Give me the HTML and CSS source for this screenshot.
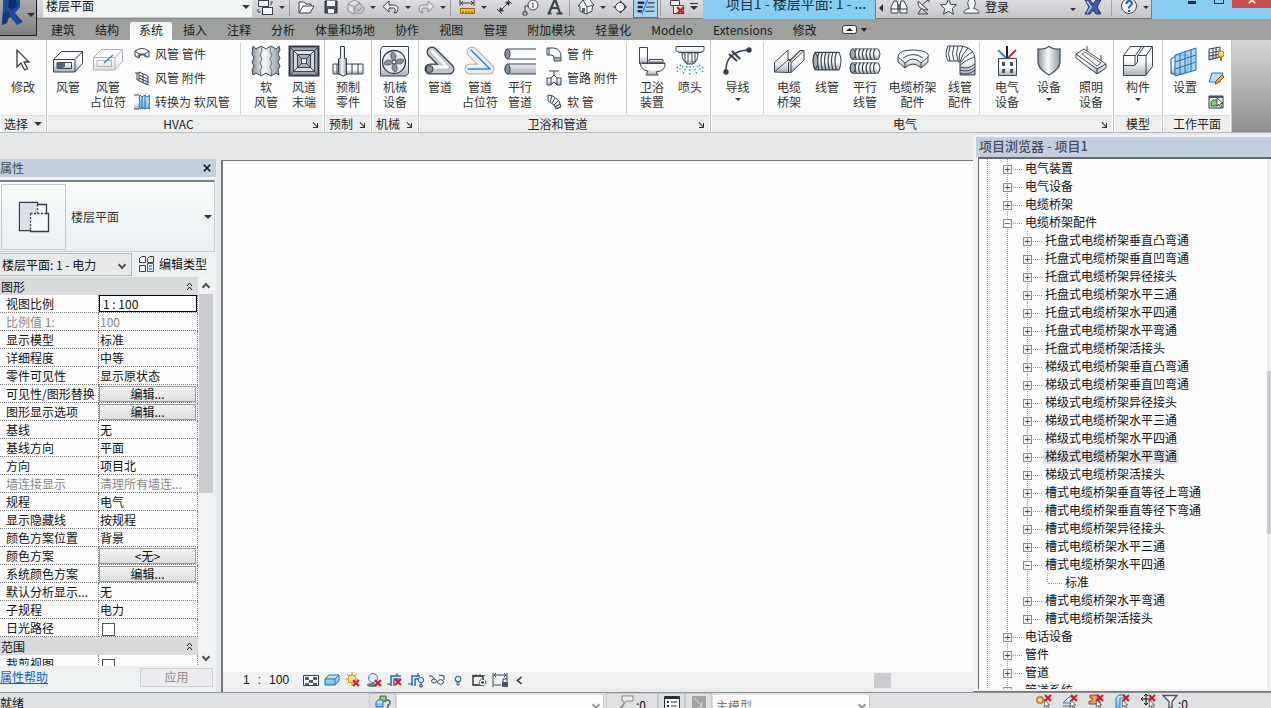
FILE: index.html
```html
<!DOCTYPE html>
<html lang="zh-CN">
<head>
<meta charset="utf-8">
<title>项目1 - 楼层平面</title>
<link rel="stylesheet" href="styles.css">
</head>
<body>
<svg class="defs" aria-hidden="true">
  <defs>
    <linearGradient id="metal" x1="0" y1="0" x2="0" y2="1"><stop offset="0" stop-color="#f4f6f8"/><stop offset=".5" stop-color="#fff"/><stop offset="1" stop-color="#a9b0b9"/></linearGradient>
    <linearGradient id="metalx" x1="0" y1="0" x2="1" y2="0"><stop offset="0" stop-color="#8d959f"/><stop offset=".45" stop-color="#fafbfc"/><stop offset="1" stop-color="#8d959f"/></linearGradient>
    <linearGradient id="blue" x1="0" y1="0" x2="0" y2="1"><stop offset="0" stop-color="#d5edfb"/><stop offset="1" stop-color="#6db4e4"/></linearGradient>
    <symbol id="redx" viewBox="0 0 8 8"><path d="M1 1l6 6M7 1l-6 6" stroke="#c8202a" stroke-width="2.2" fill="none"/></symbol>
    <symbol id="rib" viewBox="0 0 30 16" preserveAspectRatio="none"><path d="M3 1h24q4 7 0 14H3q-4-7 0-14z" fill="url(#metal)" stroke="#3a4350"/><path d="M7 1q-3 7 0 14M10.500 1q-3 7 0 14M14 1q-3 7 0 14M17.500 1q-3 7 0 14M21 1q-3 7 0 14M24.500 1q-3 7 0 14" fill="none" stroke="#3a4350" stroke-width="1.200"/><ellipse cx="3.500" cy="8" rx="2.300" ry="6" fill="#a7adb6" stroke="#3a4350"/></symbol>
    <symbol id="curs" viewBox="0 0 8 10"><path d="M1 0v8l2-2 1.500 3.500 1.500-.6L4.500 5.500H7z" fill="#fff" stroke="#333" stroke-width=".8"/></symbol>
  </defs>
</svg>

<header class="top">
  <button class="app" aria-label="应用程序菜单"><svg viewBox="0 0 36 36" width="36" height="36"><path d="M3-2L12-6l8 3v10l-5 6 8 9-6 3-8-10-2 8-5 2 1-16z" fill="#1d4b9c"/><path d="M9 0h7l1 6-5 4-4-3z" fill="#0e2f6e"/><path d="M3 13l5-2 3 6-3 2-1 4-5 2z" fill="#16397c"/><path d="M27 13h8l-4 4z" fill="#333"/></svg></button>
  <div class="titlebar">
    <div class="quick">
      <div class="pick viewpick"><select aria-label="视图"><option>楼层平面</option></select><i class="caret"></i></div>
      <button class="q" aria-label="切换窗口"><svg viewBox="0 0 20 20"><rect x="3.500" y="3.500" width="10" height="6" class="w"/><rect x="7.500" y="10.500" width="10" height="7" class="w"/><path d="M16 8V5h2M3 12v3h3" class="l"/></svg></button>
      <button class="c" aria-label="更多"><i class="caret"></i></button><i class="sep"></i>
      <button class="q" aria-label="打开"><svg viewBox="0 0 20 20"><path d="M3 16V5h5l2 2h5v3" class="w"/><path d="M3 16l4-7h11l-4 7z" class="w"/></svg></button>
      <button class="q" aria-label="保存"><svg viewBox="0 0 20 20"><path d="M4 4h12v12H4z" fill="#4a5260" stroke="#222b38"/><path d="M6 4h8v5H6zM7 12h6v4H7z" fill="#f4f5f7"/></svg></button>
      <button class="q dim" aria-label="同步"><svg viewBox="0 0 20 20"><path d="M2 7l6-4 6 3v7l-6 4-6-3zM2 7l6 3 6-4M8 10v7" class="w"/><circle cx="13.500" cy="12" r="4.500" fill="#bfc2c6" stroke="#555"/><path d="M11 12l2 2 3-4" class="l"/></svg></button>
      <button class="c" aria-label="更多"><i class="caret"></i></button>
      <button class="q" aria-label="放弃"><svg viewBox="0 0 20 20"><path d="M8 4v4h4q5 0 5 4t-4 4q3-5-1-5H8v4L2 9.500z" class="w"/></svg></button>
      <button class="c" aria-label="更多"><i class="caret"></i></button>
      <button class="q dim" aria-label="重做"><svg viewBox="0 0 20 20"><path d="M12 4v4H8q-5 0-5 4t4 4q-3-5 1-5h4v4l6-5.500z" class="w"/></svg></button>
      <button class="c" aria-label="更多"><i class="caret"></i></button><i class="sep"></i>
      <button class="q" aria-label="测量"><svg viewBox="0 0 20 20"><path d="M3 3v6M17 3v6M3 6h14M6 4L4 6l2 2M14 4l2 2-2 2" class="l"/><path d="M3.500 11.500h14v5h-14z" fill="#f5bd3c" stroke="#9a6a10"/><path d="M6 14v2M9 14v2M12 14v2M15 14v2" stroke="#6d4a08"/></svg></button>
      <button class="c" aria-label="更多"><i class="caret"></i></button><i class="gap"></i>
      <button class="q" aria-label="对齐尺寸标注"><svg viewBox="0 0 20 20"><path d="M2 12l5 5M12 2l5 5M5 14l9-9" class="l"/><path d="M4 15l1-5 4 4zM15 4l-5 1 4 4z" fill="#333"/></svg></button>
      <button class="q" aria-label="按类别标记"><svg viewBox="0 0 20 20"><circle cx="13" cy="8" r="5" class="w"/><path d="M8 9H5v6M3 15h4v3H3z" class="l"/><path d="M12 6.500l1-.5v5" class="l"/></svg></button>
      <button class="q" aria-label="文字"><svg viewBox="0 0 20 20"><path d="M10 2L4 16M10 2l5 14M6 11h7M2.500 16.500h4M11.500 16.500h6" fill="none" stroke="#3a414c" stroke-width="2.200"/></svg></button>
      <i class="sep"></i>
      <button class="q" aria-label="默认三维视图"><svg viewBox="0 0 20 20"><path d="M2 9l5-6 6-1 5 6-1.500 1-.5 5-6 3-6-3V9z" class="w"/><path d="M7 3l4 7v7M11 10l6-2" class="l"/><path d="M6 11h3v5l-3-1z" fill="#59616e"/></svg></button>
      <button class="c" aria-label="更多"><i class="caret"></i></button>
      <button class="q" aria-label="剖面"><svg viewBox="0 0 20 20"><path d="M9 3l7 7-7 7z" fill="#333c48"/><circle cx="9" cy="10" r="4.500" class="w"/><path d="M2 10h3" class="l"/></svg></button>
      <button class="q on" aria-label="细线"><svg viewBox="0 0 24 20"><path d="M2 5h8M2 10h6M2 15h5" stroke="#28303c" stroke-width="3"/><path d="M14 5h8M12 10h10M11 15h11" stroke="#28303c" stroke-width="1.300"/><path d="M14 1L7 19" stroke="#2a80d8" stroke-width="1.500"/></svg></button>
      <i class="sep"></i>
      <button class="q" aria-label="关闭隐藏窗口"><svg viewBox="0 0 20 20"><path d="M3.500 3.500h9v5h-9z" class="w"/><path d="M6.500 8.500h10v8h-10z" class="w"/><use href="#redx" x="9" y="9" width="9" height="9"/></svg></button>
      <button class="c" aria-label="自定义"><i class="caret bar"></i></button>
    </div>
    <div class="doc"><span>项目1 - 楼层平面: 1 - ...</span></div>
    <div class="info">
      <button class="c" aria-label="收起"><i class="caret left"></i></button>
      <button class="q" aria-label="搜索"><svg viewBox="0 0 20 20"><path d="M5 4h3l1 5v7H2V10zM15 4h-3l-1 5v7h7V10z" class="w"/><path d="M9 8h2v4H9zM2 12h7M11 12h7" class="l"/></svg></button>
      <button class="q" aria-label="通讯中心"><svg viewBox="0 0 20 20"><path d="M4 4q-1 9 10 9z" class="w"/><path d="M8 8l6-5M13 3h2v2M9 13l5 4H4l3-5" class="l"/></svg></button>
      <button class="q" aria-label="收藏夹"><svg viewBox="0 0 20 20"><path d="M9.500 2l2.300 5.300 5.700.5-4.300 3.800 1.300 5.700-5-3-5 3 1.300-5.700L1.500 7.800l5.700-.5z" class="w"/></svg></button>
      <button class="login"><svg viewBox="0 0 20 20"><path d="M2 17q0-4 6-5-2-2-2-6 0-4 4-4t4 4q0 4-2 6 6 1 6 5z" class="w"/></svg><span>登录</span><i class="caret"></i></button>
      <button class="q" aria-label="Exchange"><svg viewBox="0 0 20 20"><path d="M2 3h5l3 4 3-4h5l-4 7 4 7h-5l-3-4-3 4H2l4-7z" fill="#3f5fa8" stroke="#27355e"/><path d="M4 4l4 6-4 6" fill="none" stroke="#a8c4ec" stroke-width="1.500"/></svg></button>
      <i class="sep wide"></i>
      <button class="q" aria-label="帮助"><svg viewBox="0 0 20 20"><circle cx="10" cy="9" r="7.500" class="w"/><path d="M7.500 7q0-3 2.700-3t2.700 2.500q0 1.500-1.600 2.300T10 11v.5M10 13v2" fill="none" stroke="#2560b4" stroke-width="2"/></svg></button>
      <button class="c" aria-label="更多"><i class="caret"></i></button>
    </div>
    <div class="win">
      <button aria-label="最小化"><i class="min"></i></button><button aria-label="最大化"><i class="max"></i></button><button class="close" aria-label="关闭"><svg viewBox="0 0 10 10" width="8" height="8"><path d="M1 1l8 8M9 1L1 9" stroke="#fff" stroke-width="2"/></svg></button>
    </div>
  </div>
  <nav class="tabs">
    <a href="#">建筑</a><a href="#">结构</a><a href="#" class="cur">系统</a><a href="#">插入</a><a href="#">注释</a><a href="#">分析</a><a href="#">体量和场地</a><a href="#">协作</a><a href="#">视图</a><a href="#">管理</a><a href="#">附加模块</a><a href="#">轻量化</a><a href="#">Modelo</a><a href="#">Extensions</a><a href="#">修改</a>
    <button class="mini" aria-label="最小化功能区"><svg viewBox="0 0 26 10" width="26" height="10"><rect x=".5" y=".5" width="14" height="8" rx="2" fill="#f5f5f5" stroke="#333"/><path d="M4 6h7L7.500 3zM19 3h6l-3 4z" fill="#222"/></svg></button>
  </nav>
</header>

<section class="ribbon">
  <div class="panel">
    <div class="body"><button class="big w46"><svg viewBox="0 0 32 32"><path d="M10 5v17l4-4 3.500 7 3-1.500L17 17h5z" fill="#fff" stroke="#333c48" stroke-width="1.300"/></svg><span>修改</span></button></div>
    <h2>选择<i class="caret"></i></h2>
  </div>
  <div class="panel pad">
    <div class="body">
      <button class="big w40"><svg viewBox="0 0 32 32"><path d="M1.500 14.500l8-8h21v12l-7.500 8.500h-21.500z" class="m"/><path d="M1.500 14.500h21.500v12.500M23 14.500l7.500-8M5 17.500h14.500v6H5z" class="l"/><path d="M5 17.500h8v4l-3 2H5z" fill="#596270"/></svg><span>风管</span></button>
      <button class="big w40"><svg viewBox="0 0 32 32"><g opacity=".4"><path d="M1.500 12.500l8-8h21v12l-7.500 8.500h-21.500z" class="m"/><path d="M1.500 12.500h21.500v12.500M23 12.500l7.500-8M5 15.500h14.500v6H5z" class="l"/></g><path d="M12 18l9-8" stroke="#2f86d6" stroke-width="1.500"/></svg><span>风管<br>占位符</span></button>
      <div class="small w112">
        <button><svg viewBox="0 0 16 16"><path d="M1 5q7-5 14 0v6h-3l-1-2H6l-1 3-4-2z" class="m"/><path d="M1 5l4 3h6l4-3M5 8v4M11 8v3" class="l"/></svg>风管 管件</button>
        <button><svg viewBox="0 0 16 16"><path d="M5 2l9 4v9l-9-4z" class="m"/><path d="M5 5l9 4M5 8l9 4M1 3h4M3 3v7h2M9 4v9" class="l"/></svg>风管 附件</button>
        <button><svg viewBox="0 0 16 16"><path d="M0 1h5v14H0z" fill="url(#metal)"/><path d="M0 1h5M0 15h5" class="l"/><path d="M6 1l2 2 3-2 2 2 3-2-1 3 1 4-1 3 1 4-3-1-2 1-3-1-2 1-1-4 1-3-1-4z" fill="url(#blue)" stroke="#1f6fb8"/><path d="M8 3v11M11 1v14" stroke="#1f6fb8"/></svg>转换为 软风管</button>
      </div>
      <i class="div"></i>
      <button class="big w38"><svg viewBox="0 0 32 32"><path d="M3 1l3 3 5-3 5 3 5-3 5 3 3-3 1 4-2 4 2 4-2 4 2 4-2 4 1 5-3-2-5 3-5-3-5 3-5-3-3 2-1-5 2-4-2-4 2-4-2-4z" fill="url(#metalx)" stroke="#3a4350"/><path d="M11 1l1 5-2 4 2 4-2 4 2 4-2 4 1 5M21 1l-1 5 2 4-2 4 2 4-2 4 2 4-1 5" fill="none" stroke="#6a727e"/></svg><span>软<br>风管</span></button>
      <button class="big w38"><svg viewBox="0 0 32 32"><path d="M1.500 1.500h29v29h-29z" fill="#9ea4ac" stroke="#2f3844" stroke-width="2"/><path d="M5.500 5.500h21v21h-21z" fill="#dfe2e5" stroke="#3a4350" stroke-width="1.200"/><path d="M9.500 9.500h13v13h-13z" fill="#aab0b8" stroke="#3a4350" stroke-width="1.200"/><path d="M13.500 13.500h5v5h-5z" fill="#fff" stroke="#3a4350" stroke-width="1.200"/><path d="M1 1l12 12M31 1L19 13M1 31l12-12M31 31L19 19" stroke="#3a4350"/></svg><span>风道<br>末端</span></button>
    </div>
    <h2>HVAC<b class="corner"></b></h2>
  </div>
  <div class="panel">
    <div class="body"><button class="big w46"><svg viewBox="0 0 32 32"><path d="M1 19h30v10H1z" class="m"/><path d="M5 19v10M20 19v10M26 19v10" class="l"/><path d="M8.500 1.500h4v12h2v16l-3 1.500-5-2v-15l2-1z" fill="url(#metalx)" stroke="#333c48"/></svg><span>预制<br>零件</span></button></div>
    <h2>预制<b class="corner"></b></h2>
  </div>
  <div class="panel">
    <div class="body"><button class="big w46"><svg viewBox="0 0 32 32"><path d="M1.500 4.500l2-3h26v27l-3 2.500h-25z" class="m"/><circle cx="15" cy="17" r="11.500" fill="#e8eaec" stroke="#333c48" stroke-width="1.300"/><path d="M15 17q-5-5-2-10 7 2 2 10zM15 17q5-5 10-2-2 7-10 2zM15 17q5 5 2 10-7-2-2-10zM15 17q-5 5-10 2 2-7 10-2z" fill="#8b929d" stroke="#4a5260" stroke-width=".8"/><circle cx="15" cy="17" r="2" fill="#fff" stroke="#333"/></svg><span>机械<br>设备</span></button></div>
    <h2>机械<b class="corner"></b></h2>
  </div>
  <div class="panel pad">
    <div class="body">
      <button class="big w40"><svg viewBox="0 0 32 32"><g fill="none" stroke-linecap="round" stroke-linejoin="round"><path d="M6 24h19L8 7" stroke="#333c48" stroke-width="11"/><path d="M6 24h19L8 7" stroke="#c3c8ce" stroke-width="8.500"/><path d="M7 22h16L8 6" stroke="#f7f8f9" stroke-width="3"/></g><circle cx="5.500" cy="24" r="3.500" fill="#8b939e" stroke="#333c48"/></svg><span>管道</span></button>
      <button class="big w40"><svg viewBox="0 0 32 32"><g fill="none" stroke-linecap="round" stroke-linejoin="round"><path d="M6 24h19L8 7" stroke="#b6bbc1" stroke-width="11"/><path d="M6 24h19L8 7" stroke="#eceef0" stroke-width="8.500"/><path d="M4 24h22L7 5" stroke="#2f86d6" stroke-width="1.500"/></g></svg><span>管道<br>占位符</span></button>
      <button class="big w40"><svg viewBox="0 0 32 32"><path d="M3 4h30v10H3q-4-5 0-10zM3 19h30v10H3q-4-5 0-10z" class="m"/><ellipse cx="3.500" cy="9" rx="2.500" ry="4.500" fill="#8b939e" stroke="#333c48"/><ellipse cx="3.500" cy="24" rx="2.500" ry="4.500" fill="#8b939e" stroke="#333c48"/></svg><span>平行<br>管道</span></button>
      <div class="small w86">
        <button><svg viewBox="0 0 16 16"><path d="M1 2h7q7 1 7 9v4H8v-3q0-3-3-3H1z" class="m"/><path d="M3 2v7M8 12h7" class="l"/></svg>管 件</button>
        <button><svg viewBox="0 0 16 16"><path d="M3 1h10M8 1v5" class="l"/><path d="M1 8h4l3-3 3 3h4v7h-4l-3-3-3 3H1z" class="m"/><path d="M5 8v7M11 8v7" class="l"/></svg>管路 附件</button>
        <button><svg viewBox="0 0 16 16"><path d="M2 1l5 1 6 5 2 6-5 2-2-4-6-4z" class="m"/><path d="M6 2L4 8M9 4L6 9M12 7l-4 4M14 10l-5 3" class="l"/></svg>软 管</button>
      </div>
      <i class="div"></i>
      <button class="big w38"><svg viewBox="0 0 32 32"><path d="M3.500 2.500h8v16h-8z" class="m"/><path d="M4 18h25q1 8-9 9l2 3H10l2-4q-7-1-8-8z" class="m"/><path d="M13 14.500h14v2.500H13zM6 18.500h23" class="m"/></svg><span>卫浴<br>装置</span></button>
      <button class="big w38"><svg viewBox="0 0 32 32"><path d="M2 1.500h28v4l-3 2H5l-3-2z" class="m"/><path d="M8 8q0 8 5 11h6q5-3 5-11h-3v9h-3V8h-4v9h-3V8z" class="m"/><path d="M9 21l-7 7M13 21l-4 8M16 21v9M19 21l4 8M23 21l7 7M7 20l-6 4M25 20l6 4" stroke="#3b8fd4" stroke-width="1.500" stroke-dasharray="1.500 2"/></svg><span>喷头</span></button>
    </div>
    <h2>卫浴和管道<b class="corner"></b></h2>
  </div>
  <div class="panel pad">
    <div class="body">
      <button class="big w51"><svg viewBox="0 0 32 32"><path d="M4 27Q3 6 27 5" class="l" stroke-width="1.500"/><path d="M7 9l8 7M10 6l8 8" stroke="#333c48" stroke-width="2"/><circle cx="4" cy="27" r="2.700" fill="#333c48"/><circle cx="27" cy="5" r="2.700" fill="#333c48"/></svg><span>导线</span><i class="caret tiny"></i></button>
      <i class="div"></i>
      <button class="big w38"><svg viewBox="0 0 32 32"><path d="M1.500 17.500L15 5v9l1 2L27 5.500h4V15L18 27.500h-2.500L1.500 27z" class="m"/><path d="M1.500 27L16 14l2 3M15.500 27v-9l12-12.500M31 5.500L18 18v9" class="l"/></svg><span>电缆<br>桥架</span></button>
      <button class="big w38"><svg viewBox="0 0 32 32"><use href="#rib" x="1" y="6" width="30" height="20"/></svg><span>线管</span></button>
      <button class="big w38"><svg viewBox="0 0 32 32"><use href="#rib" x="0" y="3" width="32" height="12"/><use href="#rib" x="0" y="17" width="32" height="12"/></svg><span>平行<br>线管</span></button>
      <button class="big w57"><svg viewBox="0 0 32 32"><path d="M1 12q0-5 8-6.500t16 .5 6 6v5l-7 6-4-3q-4-2-8 0l-4 3-7-6z" class="m"/><path d="M1 12l7 6 4-3q4-2 8 0l4 3 7-6M8 18v5M24 18v5M6 13q10-7 20 0" class="l"/></svg><span>电缆桥架<br>配件</span></button>
      <button class="big w38"><svg viewBox="0 0 32 32"><path d="M4 1h14q13 2 13 14v15H16V18q0-2-3-2H4q-4-7 0-15z" class="m"/><path d="M6 1q-3 8 0 15M10 1q-3 8 0 15M14 1q-3 8 0 15M19 1q-5 8-4 16M24 3q-6 6-8 14M28 7q-8 5-12 11M30 12q-8 3-14 8M16 22q8 3 15-3M16 25q8 3 15-3M16 28q8 3 15-3" fill="none" stroke="#3a4350"/></svg><span>线管<br>配件</span></button>
      <i class="div"></i>
      <button class="big w42"><svg viewBox="0 0 32 32"><path d="M16 1v12" stroke="#222" stroke-width="2"/><path d="M7 5l8 8" stroke="#2f86d6" stroke-width="2"/><path d="M25 5l-8 8" stroke="#d02828" stroke-width="2"/><path d="M7.500 13.500h18v17h-18z" class="m"/><path d="M11 17h3v4h-3zM19 17h3v4h-3zM11 24h3v4h-3zM19 24h3v4h-3z" fill="#4a5260"/></svg><span>电气<br>设备</span></button>
      <button class="big w42"><svg viewBox="0 0 32 32"><path d="M5 4q6 1 11-2.500Q21 5 27 4v13q0 7-11 13Q5 24 5 17z" fill="url(#metalx)" stroke="#4a5260" stroke-width="1.300"/></svg><span>设备</span><i class="caret tiny"></i></button>
      <button class="big w42"><svg viewBox="0 0 32 32"><path d="M12 1v6M26 10v8" class="l"/><path d="M1 9l8-5 22 15v4l-9 6L1 13z" class="m"/><path d="M1 9l21 15 9-5M22 24v5" class="l"/><path d="M7 9l3-2 16 11-4 3z" fill="#fff" stroke="#59616e"/></svg><span>照明<br>设备</span></button>
    </div>
    <h2>电气<b class="corner"></b></h2>
  </div>
  <div class="panel">
    <div class="body"><button class="big w48"><svg viewBox="0 0 32 32"><path d="M1.500 10.500l7-9h22v20l-7 9h-22z" class="m"/><path d="M1.500 20.500h11l3-3v-7H25M13 10v10M1.500 10.500h12l6-9M16 10.500l6-9M24 10.500v20M24 10.500l6.500-9" class="l"/></svg><span>构件</span><i class="caret tiny"></i></button></div>
    <h2>模型</h2>
  </div>
  <div class="panel pad">
    <div class="body">
      <button class="big w42"><svg viewBox="0 0 32 32"><path d="M2 14l6-4h11v15l-5 4H2z" class="m"/><path d="M6 10l21-7v22L6 31z" fill="#8dc8ee" fill-opacity=".75" stroke="#1f6fb8"/><path d="M11 8v22M16 7v21M22 5v22M6 17l21-7M6 24l21-7" stroke="#1f6fb8"/></svg><span>设置</span></button>
      <div class="small icons">
        <button aria-label="显示"><svg viewBox="0 0 16 16"><path d="M1 3l11-2v10L1 14z" class="m"/><path d="M5 2v11M8 2v10M1 7l11-2M1 10l11-2" class="l"/><circle cx="13" cy="8" r="3" fill="#ffd45a" stroke="#c07a10"/><path d="M12 11h2v4h-2z" fill="#777"/></svg></button>
        <button aria-label="参照平面"><svg viewBox="0 0 16 16"><path d="M4 3h11l-3 9H1z" fill="#b9def6" stroke="#2b78bb"/><path d="M7 14l1-3 6-6 2 2-6 6z" fill="#f4b13a" stroke="#7a4a10"/></svg></button>
        <button aria-label="查看器"><svg viewBox="0 0 16 16"><path d="M1 2h14v12H1z" fill="#eef0f1" stroke="#333c48"/><path d="M1 2h14v2H1z" fill="#4a5260"/><path d="M3 8l2-2h5v6H3z" fill="#8fc47a" stroke="#2f7a2a"/><use href="#curs" x="8" y="3" width="8" height="12"/></svg></button>
      </div>
    </div>
    <h2>工作平面</h2>
  </div>
</section>

<main class="work">
  <aside class="props">
    <div class="phead"><h3>属性</h3><button aria-label="关闭属性"><svg viewBox="0 0 10 10" width="8" height="8"><path d="M1 1l8 8M9 1L1 9" stroke="#111" stroke-width="2"/></svg></button></div>
    <button class="type"><span class="thumb"><svg viewBox="0 0 32 32" width="32" height="32"><path d="M1.500 1.500h18v2h9v9h2v18h-18v-1h-11z" fill="#f7f8f9" stroke="#333c48" stroke-width="1.300"/><path d="M2 2h17v10h-6v17H2z" fill="#dcdfe5"/><path d="M19.500 3.500v9M12.500 12.500h16M12.500 12.500v17" fill="none" stroke="#333c48" stroke-width="1.300" stroke-dasharray="2 1.500"/></svg></span><span class="tname">楼层平面</span><i class="caret"></i></button>
    <div class="inst">
      <div class="pick"><select aria-label="实例"><option>楼层平面: 1 - 电力</option></select><i class="chev"></i></div>
      <button class="edit"><svg viewBox="0 0 16 16" width="16" height="16"><path d="M1.500 2.500l2-2h4v6h-6zM9.500 2.500l2-2h4v6h-6zM1.500 9.500h6v6h-6z" class="w"/><path d="M9.500 7.500h6v8h-6z" fill="#dcebfa" stroke="#2a5fa8"/><path d="M11 10h3M11 13h3" stroke="#2a5fa8"/></svg><span>编辑类型</span></button>
    </div>
    <div class="list">
      <table>
        <tr class="grp"><th colspan="2"><span>图形</span><svg viewBox="0 0 7 9" width="7" height="9"><path d="M1 4l2.500-3L6 4M1 8l2.500-3L6 8" class="k"/></svg></th></tr>
        <tr><th>视图比例</th><td class="ed"><input value="1 : 100" aria-label="视图比例"></td></tr>
        <tr class="off"><th>比例值 1:</th><td>100</td></tr>
        <tr><th>显示模型</th><td>标准</td></tr>
        <tr><th>详细程度</th><td>中等</td></tr>
        <tr><th>零件可见性</th><td>显示原状态</td></tr>
        <tr><th>可见性/图形替换</th><td class="bt"><button>编辑...</button></td></tr>
        <tr><th>图形显示选项</th><td class="bt"><button>编辑...</button></td></tr>
        <tr><th>基线</th><td>无</td></tr>
        <tr><th>基线方向</th><td>平面</td></tr>
        <tr><th>方向</th><td>项目北</td></tr>
        <tr class="off"><th>墙连接显示</th><td>清理所有墙连...</td></tr>
        <tr><th>规程</th><td>电气</td></tr>
        <tr><th>显示隐藏线</th><td>按规程</td></tr>
        <tr><th>颜色方案位置</th><td>背景</td></tr>
        <tr><th>颜色方案</th><td class="bt"><button>&lt;无&gt;</button></td></tr>
        <tr><th>系统颜色方案</th><td class="bt"><button>编辑...</button></td></tr>
        <tr><th>默认分析显示...</th><td>无</td></tr>
        <tr><th>子规程</th><td>电力</td></tr>
        <tr><th>日光路径</th><td><input type="checkbox" aria-label="日光路径"></td></tr>
        <tr class="grp"><th colspan="2"><span>范围</span><svg viewBox="0 0 7 9" width="7" height="9"><path d="M1 4l2.500-3L6 4M1 8l2.500-3L6 8" class="k"/></svg></th></tr>
        <tr><th>裁剪视图</th><td><input type="checkbox" aria-label="裁剪视图"></td></tr>
      </table>
      <div class="scroll"><i class="chev up"></i><div class="track"><div class="thumbv"></div></div><i class="chev"></i></div>
    </div>
    <div class="foot"><a href="#">属性帮助</a><button disabled>应用</button></div>
  </aside>

  <section class="view">
    <div class="canvas"></div>
    <div class="viewbar">
      <span class="scale"><span>1</span><span>:</span><span>100</span></span>
      <button aria-label="详细程度"><svg viewBox="0 0 16 16"><path d="M.5 3.500h15v10H.5z" fill="#fff" stroke="#333c48"/><path d="M2 5h4v3H2zM10 5h4v3h-4zM6 8h4v3H6zM2 11h4v2H2zM10 11h4v2h-4z" fill="#555d69"/></svg></button>
      <button aria-label="视觉样式"><svg viewBox="0 0 16 16"><path d="M1 7l4-4h10v6l-4 4H1z" fill="url(#blue)" stroke="#1f6fb8"/><path d="M1 7h10v6M11 7l4-4" fill="none" stroke="#1f6fb8"/></svg></button>
      <button aria-label="日光路径"><svg viewBox="0 0 16 16"><path d="M7 0v14M0 7h13M2 2l10 10M12 2L2 12" stroke="#e09a1c"/><circle cx="7" cy="7" r="4" fill="#ffe08a" stroke="#d88a10"/><use href="#redx" x="7" y="7" width="8" height="8"/></svg></button>
      <button aria-label="阴影"><svg viewBox="0 0 16 16"><ellipse cx="6" cy="13" rx="5" ry="2" fill="#777"/><circle cx="7" cy="6" r="4.500" fill="#dceefb" stroke="#3b83c4"/><use href="#redx" x="8" y="7" width="8" height="8"/></svg></button>
      <button aria-label="裁剪视图"><svg viewBox="0 0 16 16"><path d="M4 14V4h10M7 14V7h7" fill="none" stroke="#1f6fb8" stroke-width="1.500"/><path d="M0 12h4M10 1v3" class="l"/><use href="#redx" x="7" y="6" width="8" height="8"/></svg></button>
      <button aria-label="显示裁剪区域"><svg viewBox="0 0 16 16"><path d="M4 14V4h8M7 14V7h3" fill="none" stroke="#1f6fb8" stroke-width="1.500"/><path d="M0 12h4M10 1v3M12 12h2v3h-2z" class="l"/><circle cx="13" cy="8" r="2.700" fill="#dceefb" stroke="#2b68a8"/></svg></button>
      <button aria-label="临时隐藏"><svg viewBox="0 0 16 16"><path d="M0 4l3 0 3 4M10 3l5 1v4" class="l"/><ellipse cx="5" cy="9" rx="2.500" ry="2" class="w"/><ellipse cx="11.500" cy="10" rx="3" ry="2.300" class="w"/></svg></button>
      <button aria-label="显示隐藏图元"><svg viewBox="0 0 16 16"><circle cx="8" cy="7" r="2.700" fill="#e9f4fc" stroke="#3178bd" stroke-width="1.300"/><path d="M7 10h2v3H7z" fill="#fff" stroke="#4a5260"/></svg></button>
      <button aria-label="临时视图属性"><svg viewBox="0 0 16 16"><path d="M2 4h10v9H2z" fill="none" stroke="#222" stroke-width="1.300"/><path d="M1 3l3 2M5 2v3M9 2v3M12 5l2-2" class="l"/><circle cx="11.500" cy="10.500" r="3.300" fill="#fff" stroke="#222" stroke-dasharray="2 1"/><circle cx="11.500" cy="10.500" r="1.300" fill="#222"/></svg></button>
      <button aria-label="显示约束"><svg viewBox="0 0 16 16"><path d="M1 1v14M15 1v6M2 3h12M4 1L2 3l2 2M12 1l2 2-2 2M2 13h7" class="l"/><path d="M10 10h6v5h-6z" fill="#4a5260"/><path d="M11 10V7h4v3" class="l"/></svg></button>
      <button aria-label="收起"><svg viewBox="0 0 16 16"><path d="M8.500 5l-4 3.500 4 3.500" fill="none" stroke="#333" stroke-width="1.600"/></svg></button>
      <div class="hthumb"></div>
    </div>
  </section>

  <aside class="browser">
    <h3>项目浏览器 - 项目1</h3>
    <div class="tree">
      <div class="root">
      <ul>
        <li><p><button>+</button><span>电气装置</span></p></li>
        <li><p><button>+</button><span>电气设备</span></p></li>
        <li><p><button>+</button><span>电缆桥架</span></p></li>
        <li><p><button>−</button><span>电缆桥架配件</span></p>
          <ul>
            <li><p><button>+</button><span>托盘式电缆桥架垂直凸弯通</span></p></li>
            <li><p><button>+</button><span>托盘式电缆桥架垂直凹弯通</span></p></li>
            <li><p><button>+</button><span>托盘式电缆桥架异径接头</span></p></li>
            <li><p><button>+</button><span>托盘式电缆桥架水平三通</span></p></li>
            <li><p><button>+</button><span>托盘式电缆桥架水平四通</span></p></li>
            <li><p><button>+</button><span>托盘式电缆桥架水平弯通</span></p></li>
            <li><p><button>+</button><span>托盘式电缆桥架活接头</span></p></li>
            <li><p><button>+</button><span>梯级式电缆桥架垂直凸弯通</span></p></li>
            <li><p><button>+</button><span>梯级式电缆桥架垂直凹弯通</span></p></li>
            <li><p><button>+</button><span>梯级式电缆桥架异径接头</span></p></li>
            <li><p><button>+</button><span>梯级式电缆桥架水平三通</span></p></li>
            <li><p><button>+</button><span>梯级式电缆桥架水平四通</span></p></li>
            <li><p><button>+</button><span class="sel">梯级式电缆桥架水平弯通</span></p></li>
            <li><p><button>+</button><span>梯级式电缆桥架活接头</span></p></li>
            <li><p><button>+</button><span>槽式电缆桥架垂直等径上弯通</span></p></li>
            <li><p><button>+</button><span>槽式电缆桥架垂直等径下弯通</span></p></li>
            <li><p><button>+</button><span>槽式电缆桥架异径接头</span></p></li>
            <li><p><button>+</button><span>槽式电缆桥架水平三通</span></p></li>
            <li><p><button>−</button><span>槽式电缆桥架水平四通</span></p>
              <ul><li><p class="leaf"><span>标准</span></p></li></ul></li>
            <li><p><button>+</button><span>槽式电缆桥架水平弯通</span></p></li>
            <li><p><button>+</button><span>槽式电缆桥架活接头</span></p></li>
          </ul></li>
        <li><p><button>+</button><span>电话设备</span></p></li>
        <li><p><button>+</button><span>管件</span></p></li>
        <li><p><button>+</button><span>管道</span></p></li>
        <li><p><button>+</button><span>管道系统</span></p></li>
      </ul>
      </div>
      <div class="tscroll"><div></div></div>
    </div>
  </aside>
</main>

<footer class="status">
  <span class="ready">就绪</span>
  <button class="cell" aria-label="工作集"><svg viewBox="0 0 16 16"><path d="M5 2h6v5H5z" fill="#8fcf7a" stroke="#2c6e22"/><path d="M1 8l2-2h5v7H1z" fill="url(#blue)" stroke="#1f6fb8"/><path d="M10 8a2.500 2.500 0 1 1 3 3v5" fill="none" stroke="#59616e" stroke-width="1.600"/></svg></button>
  <div class="pick set"><select aria-label="活动工作集"><option></option></select><i class="chev"></i></div>
  <button class="cell req"><svg viewBox="0 0 16 16"><path d="M4 2h11v5h-6l-3 3V7H4z" fill="#eee" stroke="#888"/><path d="M2 15l4-5" stroke="#888" stroke-width="2"/></svg><span>:0</span></button>
  <button class="cell" aria-label="设计选项"><svg viewBox="0 0 16 16"><path d="M.5 2.500h15v13H.5z" fill="#fff" stroke="#28303c"/><path d="M1 4h14M3 8h2M3 12h2" stroke="#28303c" stroke-width="2"/><path d="M7 8h6M7 12h6" stroke="#28303c"/></svg></button>
  <button class="cell" aria-label="添加到集"><svg viewBox="0 0 16 16"><path d="M1 2h14v14H1z" fill="#a2a4a4"/><path d="M3 4l8 8M11 8v5H6" fill="none" stroke="#d8d8da"/></svg></button>
  <div class="pick opt"><select aria-label="主模型"><option>主模型</option></select><i class="chev"></i></div>
  <div class="filters">
    <button aria-label="选择链接"><svg viewBox="0 0 16 16"><circle cx="4" cy="7" r="3" fill="none" stroke="#c88a18" stroke-width="2"/><path d="M6 7h5" stroke="#c88a18" stroke-width="2"/><use href="#redx" x="8" y="1" width="8" height="8"/><use href="#curs" x="7" y="7" width="8" height="9"/></svg></button>
    <button aria-label="选择基线图元"><svg viewBox="0 0 16 16"><path d="M1 10l6-6h6l-5 6z" fill="#dceefb" stroke="#2b78bb"/><path d="M1 13h8" stroke="#2b78bb"/><use href="#redx" x="8" y="1" width="8" height="8"/><use href="#curs" x="7" y="7" width="8" height="9"/></svg></button>
    <button aria-label="选择锁定图元"><svg viewBox="0 0 16 16"><path d="M2 2h9v3H9v3h3v3H1V8h3V5H2z" fill="#ee9a5a" stroke="#a84a14"/><use href="#redx" x="8" y="1" width="8" height="8"/><use href="#curs" x="7" y="7" width="8" height="9"/></svg></button>
    <button aria-label="按面选择"><svg viewBox="0 0 16 16"><path d="M2 5l3-3h6v3H6v11H2z" fill="url(#blue)" stroke="#2b78bb"/><use href="#redx" x="8" y="1" width="8" height="8"/><use href="#curs" x="7" y="7" width="8" height="9"/></svg></button>
    <button aria-label="选择时拖曳"><svg viewBox="0 0 16 16"><path d="M6 1v11M1 6h10M4 3l2-2 2 2M3 4L1 6l2 2M4 10l2 2 2-2" class="k"/><use href="#redx" x="8" y="1" width="8" height="8"/><use href="#curs" x="8" y="7" width="8" height="9"/></svg></button>
    <button class="funnel"><svg viewBox="0 0 16 16"><path d="M1 2.500h14l-5 6V15H7V8.500z" fill="url(#metal)" stroke="#4a5260" stroke-width="1.300"/></svg><span>:0</span></button>
  </div>
</footer>
</body>
</html>
```

FILE: styles.css
```css
* { box-sizing: border-box; }
body {
  margin: 0; height: 100vh; overflow: hidden;
  display: flex; flex-direction: column;
  font: 12px/18px "Noto Sans CJK SC", "Noto Sans", sans-serif;
  color: #111; background: #e6e8e9;
}
button, select, input { font: inherit; color: inherit; margin: 0; padding: 0; border: 0; background: none; border-radius: 0; }
button { display: flex; align-items: center; justify-content: center; white-space: nowrap; }
select { appearance: none; width: 100%; height: 100%; outline: 0; }
h2, h3, p, ul { margin: 0; padding: 0; font-weight: normal; font-size: 12px; }
ul { list-style: none; }
svg { display: block; flex: none; }
.defs { position: absolute; width: 0; height: 0; }
.w { fill: #f4f5f7; stroke: #3a4350; }
.l { fill: none; stroke: #3a4350; }
.k { fill: none; stroke: #111; }
.m { fill: url(#metal); stroke: #3a4350; }
.caret { flex: none; width: 0; height: 0; border: 4px solid transparent; border-top-color: #333; border-bottom: 0; }
.caret.tiny { border-width: 3px 3px 0; }
.caret.left { border: 4px solid transparent; border-right-color: #333; border-left: 0; }
.caret.bar { position: relative; }
.caret.bar::before { content: ""; position: absolute; left: -4px; top: -7px; width: 8px; height: 1px; background: #333; }
.chev { flex: none; width: 6px; height: 6px; border: solid #555; border-width: 0 2px 2px 0; transform: rotate(45deg); }
.chev.up { border-width: 2px 0 0 2px; }
.pick { display: grid; align-items: center; grid-template-columns: 1fr auto; }
.pick select { grid-area: 1 / 1 / 2 / 3; }
.pick i { grid-area: 1 / 2; pointer-events: none; }

/* title bar */
.top { position: relative; flex: none; }
.app { position: absolute; left: 0; top: 0; width: 37px; height: 36px; background: linear-gradient(#a9abac, #7e8080); border: solid #222; border-width: 0 1px 1px 0; z-index: 1; overflow: hidden; }
.titlebar { display: flex; height: 19px; background: #8bcdf2; }
.quick { display: flex; padding: 0 4px 0 43px; background: linear-gradient(#dddde0, #c6c6ca); border-bottom: 1px solid #88898b; }
.viewpick { width: 209px; background: #f1f5f6; height: 17px; overflow: hidden; padding-right: 2px; }
.viewpick select { padding: 0 3px; line-height: 14px; height: 18px; align-self: start; margin-top: -3px; }
.viewpick .caret { align-self: start; margin-top: 5px; }
.q { width: 25px; height: 18px; overflow: hidden; align-items: flex-start; }
.q svg { width: 20px; height: 20px; margin-top: -3px; }
.q.dim svg { opacity: .5; }
.q.on { background: #a9d5f5; border: 1px solid #2a7cc4; border-top: 0; }
.c { width: 10px; align-items: flex-start; padding-top: 6px; }
.c .caret { border-width: 3px 3px 0; }
.c .caret.bar { border-width: 4px 4px 0; }
.c .caret.left { border-width: 4px 4px 4px 0; margin-top: -2px; }
.sep { width: 1px; margin: 0 3px 2px 2px; background: #9fa0a4; }
.sep.wide { margin: 0 4px 2px 6px; }
.gap { width: 3px; }
.doc { flex: 1; min-width: 0; overflow: hidden; text-align: center; font-size: 14px; line-height: 18px; white-space: nowrap; color: #1d2f3c; }
.doc span { display: block; margin-top: -6px; padding-left: 14px; }
.info { display: flex; width: 277px; background: linear-gradient(#dddde0, #c6c6ca); border: solid #77797b; border-width: 0 1px 1px; }
.login { flex: 1; justify-content: flex-start; gap: 4px; padding-left: 1px; }
.login svg { width: 19px; height: 19px; margin-top: -6px; }
.login span { margin-top: -4px; }
.login .caret { border-width: 3px 3px 0; margin: 0 4px 0 auto; }
.win { display: flex; width: 119px; justify-content: flex-end; }
.win button { width: 27px; height: 7px; overflow: hidden; }
.win .close { width: 39px; background: #c75050; height: 8px; }
.win .close svg { margin-top: -8px; }
.min { width: 8px; height: 3px; background: #1c2b38; margin-top: -3px; }
.max { width: 10px; height: 6px; border: 1px solid #1c2b38; margin-top: -6px; }
.tabs { display: flex; padding: 3px 0 0 41px; height: 21px; background: #9fa19f; line-height: 16px; }
.tabs a { padding: 0 10px; color: #1c1c1c; text-decoration: none; height: 18px; }
.tabs a.cur { background: linear-gradient(#eef1f2, #fdfdfd); padding: 0 9px; margin: 0 1px; border-radius: 2px 2px 0 0; }
.mini { margin-left: 15px; height: 16px; }

/* ribbon */
.ribbon { display: flex; flex: none; background: linear-gradient(#d4d6d6, #8e9090); border-bottom: 1px solid #b9bbbc; }
.panel { display: flex; flex-direction: column; background: #fdfdfd; border-right: 1px solid #c3c6c8; }
.body { display: flex; height: 75px; }
.pad .body { padding: 0 1px; }
.panel h2 { display: flex; align-items: center; justify-content: center; position: relative; gap: 6px; height: 17px; margin: 0 1px; background: #edefef; color: #222; border-top: 1px solid #dcdedf; line-height: 16px; }
.panel h2:has(.corner) { padding-right: 14px; }
.corner { position: absolute; right: 5px; bottom: 4px; width: 5px; height: 5px; border: solid #333; border-width: 0 1px 1px 0; }
.corner::after { content: ""; position: absolute; left: -1px; top: 1px; width: 6px; height: 1px; background: #333; transform: rotate(45deg); }
.big { flex-direction: column; justify-content: flex-start; padding-top: 5px; line-height: 15px; color: #333; }
.big svg { width: 32px; height: 32px; margin-bottom: 2px; }
.big .caret { margin-top: 4px; }
.w38 { width: 38px; }
.w40 { width: 40px; }
.w42 { width: 42px; }
.w46 { width: 46px; }
.w48 { width: 48px; }
.w51 { width: 51px; }
.w57 { width: 57px; }
.w86 { width: 86px; }
.w112 { width: 112px; }
.div { width: 1px; margin: 2px 6px 1px 0; background: #cfd2d4; }
.small { display: flex; flex-direction: column; padding: 2px 0 0 6px; color: #333; }
.small button { height: 24px; gap: 5px; justify-content: flex-start; }
.small svg { width: 16px; height: 16px; }
.small.icons { padding-left: 2px; width: 24px; }

/* properties */
.work { flex: 1; min-height: 0; display: flex; }
.props { display: flex; flex-direction: column; width: 216px; margin-top: 26px; background: #eef1f2; }
.phead { display: flex; justify-content: space-between; padding-right: 5px; height: 18px; background: #c3cfde; color: #444d58; flex: none; }
.type { flex: none; margin: 3px 1px 0 0; padding: 2px; height: 72px; justify-content: flex-start; border: 1px solid #c9cccd; border-top: 2px solid #7f8182; border-left: 0; background: linear-gradient(#fbfcfc, #e9eef0); color: #333; }
.thumb { display: grid; place-items: center; width: 65px; height: 66px; margin-left: -1px; border: 1px solid #c6c9cb; }
.tname { margin-left: 5px; flex: 1; text-align: left; }
.inst { display: flex; flex: none; height: 25px; padding-top: 1px; }
.inst .pick { width: 132px; height: 23px; background: #e8e9ea; border: 1px solid #b3b5b7; border-left: 0; padding-right: 6px; }
.inst select { padding: 0 2px; }
.edit { padding-left: 6px; gap: 5px; height: 21px; }
.list { flex: 1; min-height: 0; overflow: hidden; display: flex; margin-right: 2px; background: #fdfdfd; }
table { width: 198px; border-collapse: separate; border-spacing: 0; table-layout: fixed; align-self: flex-start; flex: none; }
th, td { padding: 0; height: 18px; line-height: 17px; text-align: left; font-weight: normal; white-space: nowrap; border: dotted #77797a; border-width: 0 1px 1px 0; overflow: hidden; }
th { padding-left: 6px; }
td { padding-left: 1px; }
.off { color: #858789; }
.grp th { padding: 0 5px 0 1px; background: #d9dadc; border: 0; }
.grp th span { float: left; }
.grp th svg { float: right; margin-top: 4px; }
td.ed, td.bt { padding: 0; }
td input:not([type]) { display: block; width: 100%; height: 17px; border: 1px solid #000; padding: 0 3px; background: #fff; }
td input[type=checkbox] { appearance: none; display: block; width: 13px; height: 13px; margin: 3px 0 0 2px; border: 1px solid #555; background: #fff; }
td.bt button { width: 97px; height: 16px; line-height: 14px; background: linear-gradient(#f4f4f4, #dcdddf); border: 1px solid #989a9d; }
.scroll { flex: 1; display: flex; flex-direction: column; align-items: center; background: #f1f2f3; padding: 7px 0 6px; }
.track { flex: 1; align-self: stretch; padding: 4px 1px; }
.thumbv { height: 56%; background: #cbcccf; }
.foot { flex: none; display: flex; justify-content: space-between; align-items: center; height: 26px; padding: 0 3px 4px 0; }
.foot a { color: #0a62c4; }
.foot button { width: 73px; height: 19px; border: 1px solid #cfd1d4; color: #8a8d90; background: #ececee; }

/* drawing view */
.view { flex: 1; min-width: 0; display: flex; flex-direction: column; margin: 27px 0 0 5px; border: solid #77797c; border-width: 1px 0 0 2px; }
.canvas { flex: 1; background: #fdfdfd; }
.viewbar { display: flex; align-items: center; height: 20px; padding-left: 20px; background: #f0f2f2; border-bottom: 4px solid #e9ebec; }
.scale { display: flex; gap: 8px; width: 57px; font-family: "Liberation Sans", sans-serif; }
.viewbar button { width: 21px; }
.viewbar svg { width: 16px; height: 16px; }
.hthumb { width: 17px; height: 15px; background: #cbcccf; margin: 0 82px 0 auto; }

/* project browser */
.browser { width: 298px; display: flex; flex-direction: column; margin-top: 2px; padding: 2px 0 2px 3px; background: #f0f2f3; border-bottom: 1px solid #77797c; }
.browser h3 { height: 20px; padding-left: 3px; line-height: 18px; font-size: 13px; font-weight: 500; background: #c3cfde; color: #444d58; flex: none; }
.tree { flex: 1; min-height: 0; overflow: hidden; display: flex; margin-left: 2px; border: solid #66686b; border-width: 2px 0 0 1px; background: #fdfdfd; }
.root { flex: 1; padding-left: 8px; background: repeating-linear-gradient(#999 0 1px, transparent 1px 2px) 8px 0 / 1px 100% no-repeat; }
.tree ul { margin-left: 20px; background: repeating-linear-gradient(#999 0 1px, transparent 1px 2px) left top / 1px calc(100% - 9px) no-repeat; }
.tree p { display: flex; align-items: center; height: 18px; white-space: nowrap; }
.tree p button { width: 9px; height: 9px; margin: 2px 0 0 -4px; border: 1px solid #8a8d90; background: #f6f7f8; color: #23479a; font: 10px/7px "Liberation Sans", sans-serif; }
.tree p::before { content: ""; order: 1; width: 9px; margin: 2px 1px 0; border-top: 1px dotted #999; }
.tree p span { order: 2; padding: 0 2px; line-height: 16px; }
.tree p.leaf::before { width: 14px; }
.sel { background: #e3e4e6; }
.tscroll { width: 4px; background: #eceded; padding-top: 212px; }
.tscroll div { height: 163px; background: #cbcccf; }

/* status bar */
.status { flex: none; display: flex; height: 16px; overflow: hidden; align-items: flex-start; background: #dfe0e2; border-top: 1px solid #8b8d90; }
.ready { flex: none; width: 369px; padding-top: 1px; }
.cell { height: 16px; width: 27px; border: 1px solid #c8cacc; border-width: 1px 1px 0; align-items: flex-start; }
.cell svg { width: 16px; height: 16px; }
.cell span, .funnel span { padding-top: 2px; }
.req { width: 52px; }
.req span { margin-left: 2px; }
.set { width: 207px; }
.opt { width: 157px; color: #77797c; }
.set, .opt { height: 20px; margin: 2px 2px 0 1px; background: #fdfdfd; border-right: 1px solid #c8cacc; padding-right: 4px; }
.opt select { padding: 0 3px; height: 16px; }
.status .chev { border-color: #999; }
.filters { display: flex; margin-left: auto; padding-right: 82px; }
.filters button { width: 26px; align-items: flex-start; }
.filters svg { width: 16px; height: 16px; }
.filters .funnel { width: 28px; }
```
